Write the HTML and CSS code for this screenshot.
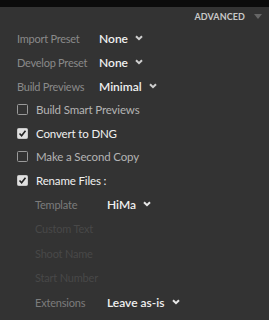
FILE: index.html
```html
<!DOCTYPE html>
<html>
<head>
<meta charset="utf-8">
<link rel="stylesheet" href="styles.css">
</head>
<body>
<div class="topbar"></div>
<div class="panel">
  <div class="header">
    <span class="adv">ADVANCED</span>
    <span class="tri"></span>
  </div>
  <div class="row preset">
    <span class="label">Import Preset</span>
    <span class="value">None</span>
    <svg class="chev" width="8" height="6" viewBox="0 0 8 6"><path d="M1 1.2 L4 4.2 L7 1.2" fill="none" stroke="#cfcfcf" stroke-width="2"/></svg>
  </div>
  <div class="row preset">
    <span class="label">Develop Preset</span>
    <span class="value">None</span>
    <svg class="chev" width="8" height="6" viewBox="0 0 8 6"><path d="M1 1.2 L4 4.2 L7 1.2" fill="none" stroke="#cfcfcf" stroke-width="2"/></svg>
  </div>
  <div class="row preset">
    <span class="label">Build Previews</span>
    <span class="value">Minimal</span>
    <svg class="chev" width="8" height="6" viewBox="0 0 8 6"><path d="M1 1.2 L4 4.2 L7 1.2" fill="none" stroke="#cfcfcf" stroke-width="2"/></svg>
  </div>
  <div class="row check">
    <span class="box"></span>
    <span class="clabel dim">Build Smart Previews</span>
  </div>
  <div class="row check">
    <span class="box on"><svg width="9" height="9" viewBox="0 0 9 9"><path d="M1.5 4.5 L3.6 6.8 L7.5 1.8" fill="none" stroke="#222" stroke-width="1.6"/></svg></span>
    <span class="clabel">Convert to DNG</span>
  </div>
  <div class="row check">
    <span class="box"></span>
    <span class="clabel dim">Make a Second Copy</span>
  </div>
  <div class="row check">
    <span class="box on"><svg width="9" height="9" viewBox="0 0 9 9"><path d="M1.5 4.5 L3.6 6.8 L7.5 1.8" fill="none" stroke="#222" stroke-width="1.6"/></svg></span>
    <span class="clabel">Rename Files :</span>
  </div>
  <div class="sub">
    <div class="srow">
      <span class="slabel">Template</span>
      <span class="value">HiMa</span>
      <svg class="chev" width="8" height="6" viewBox="0 0 8 6"><path d="M1 1.2 L4 4.2 L7 1.2" fill="none" stroke="#e8e8e8" stroke-width="2"/></svg>
    </div>
    <div class="srow"><span class="slabel off">Custom Text</span></div>
    <div class="srow"><span class="slabel off">Shoot Name</span></div>
    <div class="srow"><span class="slabel off">Start Number</span></div>
    <div class="srow">
      <span class="slabel">Extensions</span>
      <span class="value">Leave as-is</span>
      <svg class="chev" width="8" height="6" viewBox="0 0 8 6"><path d="M1 1.2 L4 4.2 L7 1.2" fill="none" stroke="#e8e8e8" stroke-width="2"/></svg>
    </div>
  </div>
</div>
</body>
</html>
```
FILE: styles.css
```css
html, body {
  margin: 0;
  padding: 0;
  background: #333333;
  width: 269px;
  height: 320px;
  overflow: hidden;
  font-family: Lato, "Open Sans", sans-serif;
}
.topbar {
  height: 7px;
  background: #0b0b0b;
}
.panel {
  padding: 0 0 0 17px;
}
.header {
  display: flex;
  justify-content: flex-end;
  align-items: center;
  height: 19px;
  padding-right: 7px;
}
.adv {
  font-size: 9px;
  font-weight: 700;
  color: #c8c8c8;
  letter-spacing: 0.1px;
  margin-right: -2px;
}
.tri {
  width: 0;
  height: 0;
  margin-left: 11px;
  border-left: 4px solid transparent;
  border-right: 4px solid transparent;
  border-top: 5px solid #666;
}
.row {
  display: flex;
  align-items: center;
  height: 24px;
}
.label {
  width: 82px;
  font-size: 11px;
  letter-spacing: -0.25px;
  color: #8a8a8a;
}
.value {
  font-size: 12px;
  color: #f0f0f0;
  font-weight: 600;
}
.chev {
  margin-left: 7px;
}
.check {
  height: 23.5px;
}
.box {
  box-sizing: border-box;
  width: 11px;
  height: 11px;
  border: 1.6px solid #9a9a9a;
  border-radius: 1.5px;
  display: flex;
  align-items: center;
  justify-content: center;
  margin-right: 8px;
}
.box.on {
  background: #e0e0e0;
  border-color: #c8c8c8;
}
.clabel {
  font-size: 11.5px;
  letter-spacing: -0.15px;
  color: #f0f0f0;
}
.clabel.dim {
  color: #b4b4b4;
}
.sub {
  padding-left: 18px;
}
.srow {
  display: flex;
  align-items: center;
  height: 24.5px;
}
.slabel {
  width: 72px;
  font-size: 11px;
  letter-spacing: -0.2px;
  color: #7c7c7c;
}
.slabel.off {
  color: #484848;
}
```
